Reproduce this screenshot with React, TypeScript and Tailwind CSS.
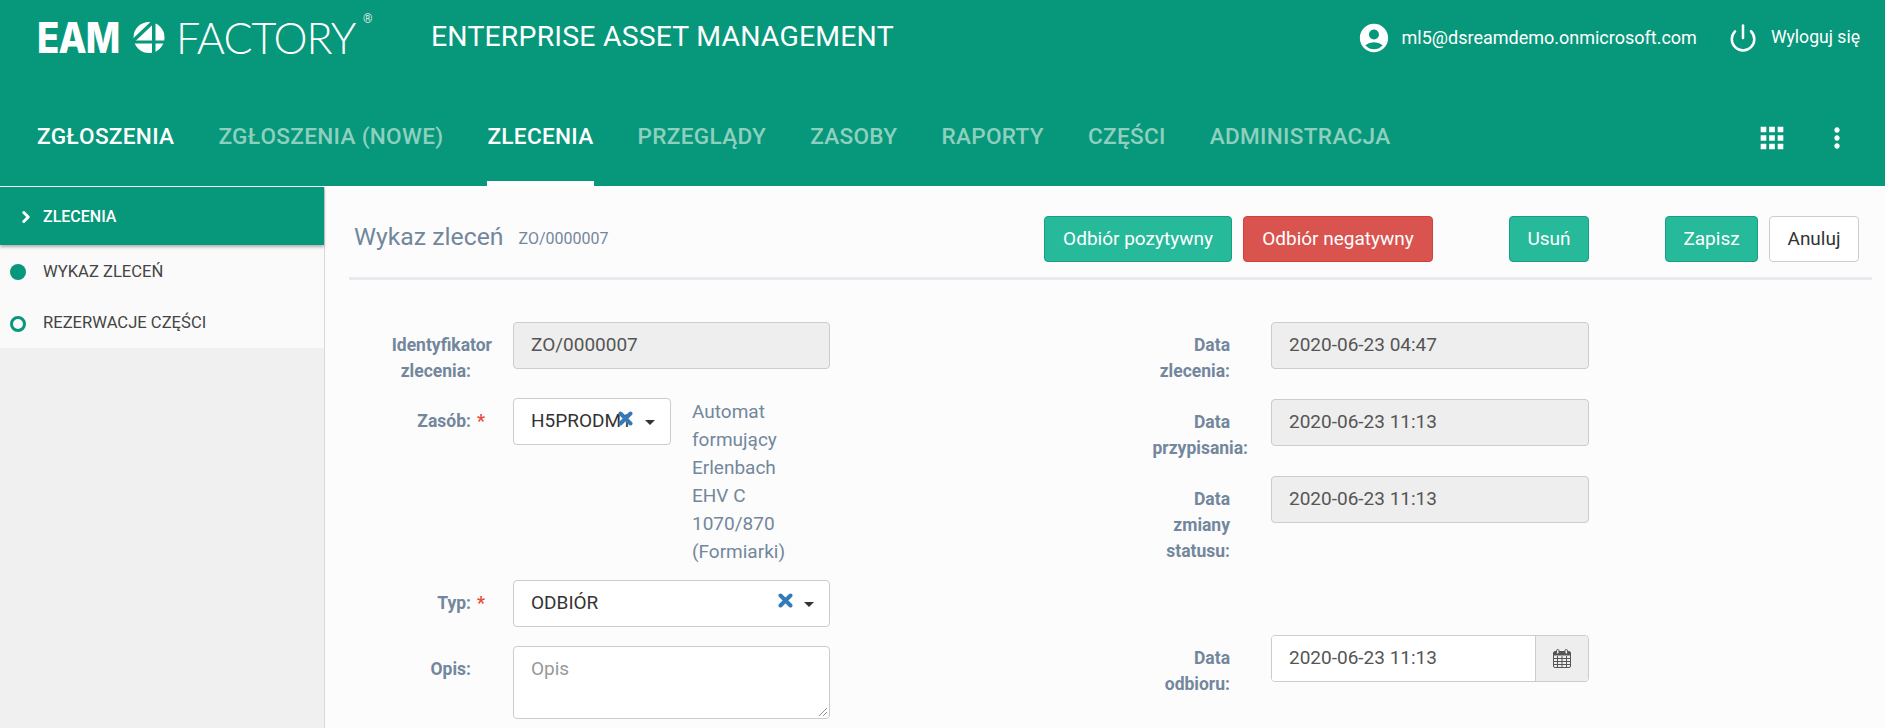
import React from 'react';
import { MdAccountCircle, MdApps, MdMoreVert } from 'react-icons/md';
import { ChevronRight, Power } from 'lucide-react';

const NAV_ITEMS = [
  { label: 'ZGŁOSZENIA', state: 'white' },
  { label: 'ZGŁOSZENIA (NOWE)', state: 'dim' },
  { label: 'ZLECENIA', state: 'active' },
  { label: 'PRZEGLĄDY', state: 'dim' },
  { label: 'ZASOBY', state: 'dim' },
  { label: 'RAPORTY', state: 'dim' },
  { label: 'CZĘŚCI', state: 'dim' },
  { label: 'ADMINISTRACJA', state: 'dim' },
];

const Logo4 = () => (
  <svg width="32" height="31" viewBox="0 0 32 31" className="ml-[15px] mr-[11px]">
    <circle cx="16" cy="15.5" r="15.5" fill="white" />
    <path d="M20 0 L0 19" stroke="#07977a" strokeWidth="3.5" />
    <rect x="0" y="18.5" width="32" height="3" fill="#07977a" />
    <rect x="19" y="0" width="3.5" height="31" fill="#07977a" />
  </svg>
);

const RemoveX = ({ className }: { className: string }) => (
  <svg width="15" height="15" viewBox="0 0 15 15" className={className}>
    <path d="M2.5 2.5 L12.5 12.5 M12.5 2.5 L2.5 12.5" stroke="#337ab7" strokeWidth="4" strokeLinecap="round" />
  </svg>
);

const Caret = () => (
  <span className="w-0 h-0 border-x-[5px] border-x-transparent border-t-[5px] border-t-[#333]" />
);

const CalendarIcon = () => (
  <svg width="18" height="19" viewBox="0 0 18 19" fill="none" stroke="#555" strokeWidth="1">
    <rect x="0.5" y="2.5" width="17" height="16" rx="1.5" />
    <rect x="1" y="3" width="16" height="3.5" fill="#555" stroke="none" />
    <path d="M1 9.5H17M1 12.5H17M1 15.5H17M4.5 7V18M9 7V18M13.5 7V18" />
    <rect x="3.5" y="0.5" width="2.5" height="4.5" rx="1.2" fill="#eee" />
    <rect x="12" y="0.5" width="2.5" height="4.5" rx="1.2" fill="#eee" />
  </svg>
);

const Label = ({ children, required, className }: { children: React.ReactNode; required?: boolean; className: string }) => (
  <div className={`shrink-0 text-right font-bold text-[17.5px] leading-[26px] text-[#73879c] pt-[10px] ${className}`}>
    {children}
    {required && <span className="absolute ml-[6px] text-[#e74c3c]">*</span>}
  </div>
);

const ReadonlyInput = ({ value, className }: { value: string; className: string }) => (
  <div className={`h-[47px] flex items-center pl-[17px] text-[19px] text-[#555] bg-[#eee] border border-[#ccc] rounded-[4px] ${className}`}>
    {value}
  </div>
);

const Btn = ({ label, className }: { label: string; className: string }) => (
  <button className={`h-[46px] rounded-[4px] text-[19px] border flex items-center justify-center ${className}`}>{label}</button>
);

export default function App() {
  return (
    <div className="h-[728px] overflow-hidden flex flex-col bg-[#fcfcfc] font-['Roboto',sans-serif]">
      {/* header */}
      <header className="h-[186px] shrink-0 bg-[#07977a] text-white flex flex-col">
        <div className="h-[75px] flex items-center pl-[37px] pr-[25px]">
          <div className="flex items-center w-[394px] relative">
            <span className="inline-block w-[81px] font-['Inter',sans-serif] font-extrabold text-[42px] leading-none tracking-[-1px] origin-left scale-x-[0.87]">EAM</span>
            <Logo4 />
            <span className="font-['Lato',sans-serif] font-light text-[43px] leading-none tracking-[-1px]">FACTORY</span>
            <span className="absolute left-[326px] top-[-6px] text-[12px] opacity-80">®</span>
          </div>
          <span className="text-[28.4px] font-normal tracking-[0.2px]">ENTERPRISE ASSET MANAGEMENT</span>
          <div className="ml-auto flex items-center">
            <MdAccountCircle size={34} className="mr-[11px]" />
            <span className="text-[18px] mr-[31px]">ml5@dsreamdemo.onmicrosoft.com</span>
            <Power size={30} strokeWidth={2} className="mr-[13px]" />
            <span className="text-[17.6px]">Wyloguj się</span>
          </div>
        </div>
        <nav className="flex-1 flex items-stretch pl-[37px] pr-[32px] pt-[15px]">
          <div className="flex gap-[44px] items-stretch">
            {NAV_ITEMS.map((item) => (
              <div
                key={item.label}
                className={`flex items-center text-[22.6px] font-medium tracking-[0.3px] border-b-[5px] pt-[3px] ${
                  item.state === 'active' ? 'border-white text-white' : 'border-transparent'
                } ${item.state === 'white' ? 'text-white' : ''} ${item.state === 'dim' ? 'text-[#8dd0bf]' : ''}`}
              >
                {item.label}
              </div>
            ))}
          </div>
          <div className="ml-auto flex items-center gap-[32px]">
            <MdApps size={34} />
            <MdMoreVert size={32} />
          </div>
        </nav>
      </header>

      <div className="flex-1 flex min-h-0 pt-px bg-white">
        {/* sidebar */}
        <aside className="w-[325px] shrink-0 bg-[#f0f0f0] border-r border-[#d8d8d8]">
          <div className="h-[58px] bg-[#07977a] text-white flex items-center pl-[17px] pt-[1px] text-[16px] font-medium shadow-[0_2px_3px_rgba(0,0,0,0.3)] relative">
            <ChevronRight size={18} strokeWidth={4} className="mr-[8px]" />
            ZLECENIA
          </div>
          <div className="bg-[#fafafa] h-[103px] text-[16.6px] text-[#444]">
            <div className="h-[54px] flex items-center pl-[10px]">
              <span className="w-[16px] h-[16px] rounded-full bg-[#07977a] mr-[17px]" />
              WYKAZ ZLECEŃ
            </div>
            <div className="h-[49px] flex items-center pl-[10px]">
              <span className="w-[16px] h-[16px] rounded-full border-[3px] border-[#07977a] mr-[17px]" />
              REZERWACJE CZĘŚCI
            </div>
          </div>
        </aside>

        {/* content */}
        <main className="flex-1 min-w-0 bg-[#fcfcfc] pl-[24px] pr-[13px]">
          <div className="h-[93px] border-b-[3px] border-[#e8eaf0] flex items-center pt-[14px] pr-[13px] pl-[5px]">
            <div className="flex items-center pb-[4px]">
              <span className="text-[24.8px] text-[#73879c]">Wykaz zleceń</span>
              <span className="text-[16px] text-[#73879c] ml-[15px] pt-[3px]">ZO/0000007</span>
            </div>
            <div className="ml-auto flex">
              <Btn label="Odbiór pozytywny" className="w-[188px] bg-[#26b99a] border-[#169f85] text-white" />
              <Btn label="Odbiór negatywny" className="w-[190px] ml-[11px] bg-[#d9534f] border-[#d43f3a] text-white" />
              <Btn label="Usuń" className="w-[80px] ml-[76px] bg-[#26b99a] border-[#169f85] text-white" />
              <Btn label="Zapisz" className="w-[93px] ml-[76px] bg-[#26b99a] border-[#169f85] text-white" />
              <Btn label="Anuluj" className="w-[90px] ml-[11px] bg-white border-[#ccc] text-[#333]" />
            </div>
          </div>

          <div className="flex pt-[42px]">
            {/* left column */}
            <div className="w-[481px] pl-[8px] shrink-0 flex flex-col">
              <div className="flex h-[76px]">
                <Label className="w-[114px]">
                  <span className="block mr-[-21px]">Identyfikator</span>zlecenia:
                </Label>
                <ReadonlyInput value="ZO/0000007" className="w-[318px] ml-[42px]" />
              </div>
              <div className="flex h-[182px]">
                <Label required className="w-[114px]">Zasób:</Label>
                <div className="relative ml-[42px] w-[158px] h-[47px] bg-white border border-[#ccc] rounded-[4px] flex items-center pl-[17px] text-[19px] text-[#333]">
                  H5PRODM1
                  <RemoveX className="absolute right-[37px] top-[12px]" />
                  <span className="absolute right-[15px] top-[21px] flex"><Caret /></span>
                </div>
                <div className="ml-[21px] w-[110px] text-[19px] leading-[28px] text-[#73879c]">
                  Automat formujący Erlenbach EHV C 1070/870 (Formiarki)
                </div>
              </div>
              <div className="flex h-[66px]">
                <Label required className="w-[114px]">Typ:</Label>
                <div className="relative ml-[42px] w-[318px] h-[47px] bg-white border border-[#ccc] rounded-[4px] flex items-center pl-[17px] text-[19px] text-[#333]">
                  ODBIÓR
                  <RemoveX className="absolute right-[36px] top-[12px]" />
                  <span className="absolute right-[15px] top-[21px] flex"><Caret /></span>
                </div>
              </div>
              <div className="flex">
                <Label className="w-[114px]">Opis:</Label>
                <div className="relative ml-[42px] w-[318px] h-[73px] bg-white border border-[#ccc] rounded-[4px] pl-[17px] pt-[8px] text-[19px] text-[#999]">
                  Opis
                  <svg width="10" height="10" viewBox="0 0 10 10" className="absolute right-[1px] bottom-[1px]" stroke="#777" strokeWidth="0.8">
                    <path d="M1 9L9 1M5 9L9 5" />
                  </svg>
                </div>
              </div>
            </div>

            {/* right column */}
            <div className="ml-[310px] flex flex-col">
              <div className="flex h-[77px]">
                <Label className="w-[90px]">Data<br />zlecenia:</Label>
                <ReadonlyInput value="2020-06-23 04:47" className="w-[318px] ml-[41px]" />
              </div>
              <div className="flex h-[77px]">
                <Label className="w-[90px]">Data<span className="block mr-[-18px] ml-[-30px]">przypisania:</span></Label>
                <ReadonlyInput value="2020-06-23 11:13" className="w-[318px] ml-[41px]" />
              </div>
              <div className="flex h-[159px]">
                <Label className="w-[90px]">Data<br />zmiany<br />statusu:</Label>
                <ReadonlyInput value="2020-06-23 11:13" className="w-[318px] ml-[41px]" />
              </div>
              <div className="flex">
                <Label className="w-[90px]">Data<br />odbioru:</Label>
                <div className="w-[318px] ml-[41px] h-[47px] flex border border-[#ccc] rounded-[4px] overflow-hidden text-[19px] text-[#555]">
                  <div className="flex-1 bg-white flex items-center pl-[17px]">2020-06-23 11:13</div>
                  <div className="w-[53px] bg-[#eee] border-l border-[#ccc] flex items-center justify-center"><CalendarIcon /></div>
                </div>
              </div>
            </div>
          </div>
        </main>
      </div>
    </div>
  );
}
